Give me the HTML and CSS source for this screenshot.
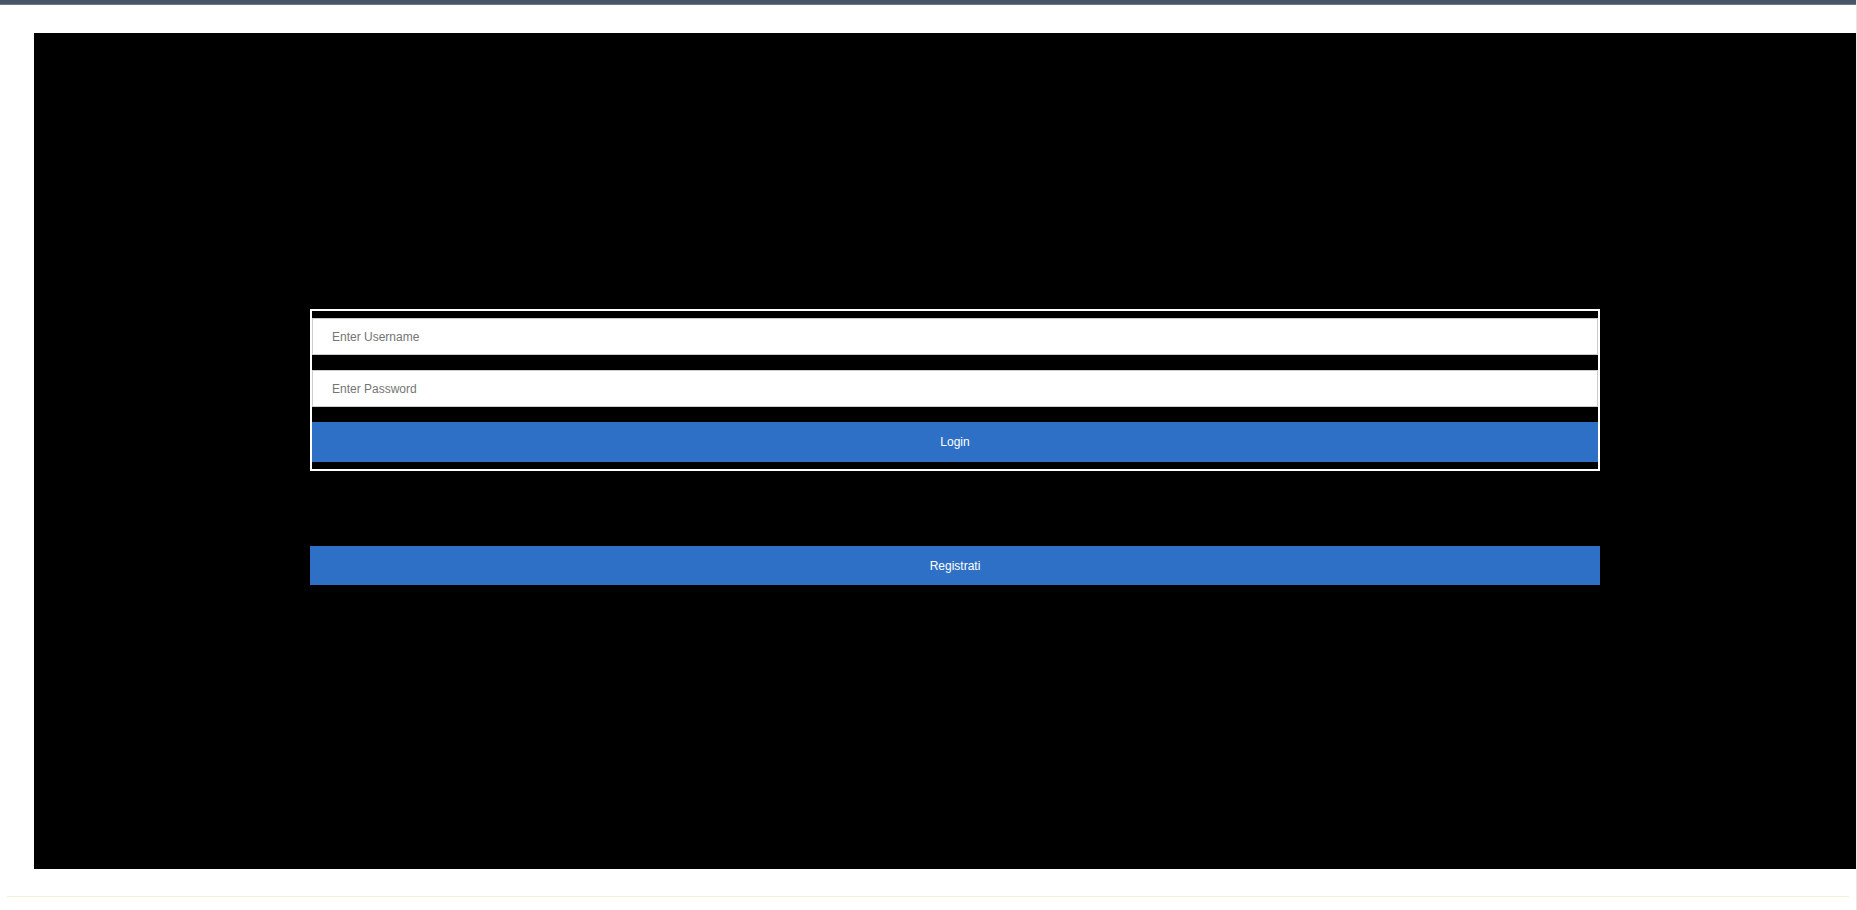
FILE: index.html
```html
<!DOCTYPE html>
<html lang="it">
<head>
<meta charset="utf-8">
<title>Login</title>
<link rel="stylesheet" href="styles.css">
</head>
<body>
<div class="page">
  <div class="main">
    <div class="topbar"></div>
    <div class="stage">
      <div class="panel">
        <form class="box">
          <input class="field" type="text" placeholder="Enter Username">
          <input class="field" type="password" placeholder="Enter Password">
          <button class="btn btn-login" type="button">Login</button>
        </form>
        <button class="btn btn-register" type="button">Registrati</button>
      </div>
    </div>
    <div class="footline"></div>
  </div>
  <div class="edge"></div>
</div>
</body>
</html>
```
FILE: styles.css
```css
html, body {
  margin: 0;
  padding: 0;
  background: #ffffff;
  font-family: "Liberation Sans", Arial, sans-serif;
}
.page {
  display: flex;
  height: 910px;
  overflow: hidden;
}
.main {
  flex: 1;
  display: flex;
  flex-direction: column;
}
.edge {
  width: 1px;
  background: #e6e6e6;
}
.topbar {
  height: 4px;
  background: #465569;
  border-bottom: 1px solid #6d7888;
}
.stage {
  padding: 28px 0 0 34px;
}
.panel {
  background: #000000;
  height: 836px;
  box-sizing: border-box;
  padding: 276px 0 0 276px;
  display: flex;
  flex-direction: column;
}
.box {
  width: 1290px;
  box-sizing: border-box;
  border: 2px solid #ffffff;
  padding: 7px 0;
  margin: 0;
  display: flex;
  flex-direction: column;
  gap: 15px;
}
.field {
  display: block;
  width: 100%;
  height: 37px;
  box-sizing: border-box;
  margin: 0;
  border: 1px solid #cccccc;
  padding: 0 19px;
  background: #ffffff;
  font-family: "Liberation Sans", Arial, sans-serif;
  font-size: 12px;
  color: #333333;
  outline: none;
}
.field::placeholder {
  color: #757575;
  opacity: 1;
}
.btn {
  display: block;
  box-sizing: border-box;
  margin: 0;
  border: none;
  padding: 0;
  background: #2e70c5;
  color: #ffffff;
  font-family: "Liberation Sans", Arial, sans-serif;
  font-size: 12px;
  text-align: center;
  cursor: pointer;
}
.btn-login {
  width: 100%;
  height: 40px;
}
.btn-register {
  width: 1290px;
  height: 39px;
  margin-top: 75px;
}
.footline {
  margin: 27px 7px 0 7px;
  height: 1px;
  background: #f3f3d8;
}
```
